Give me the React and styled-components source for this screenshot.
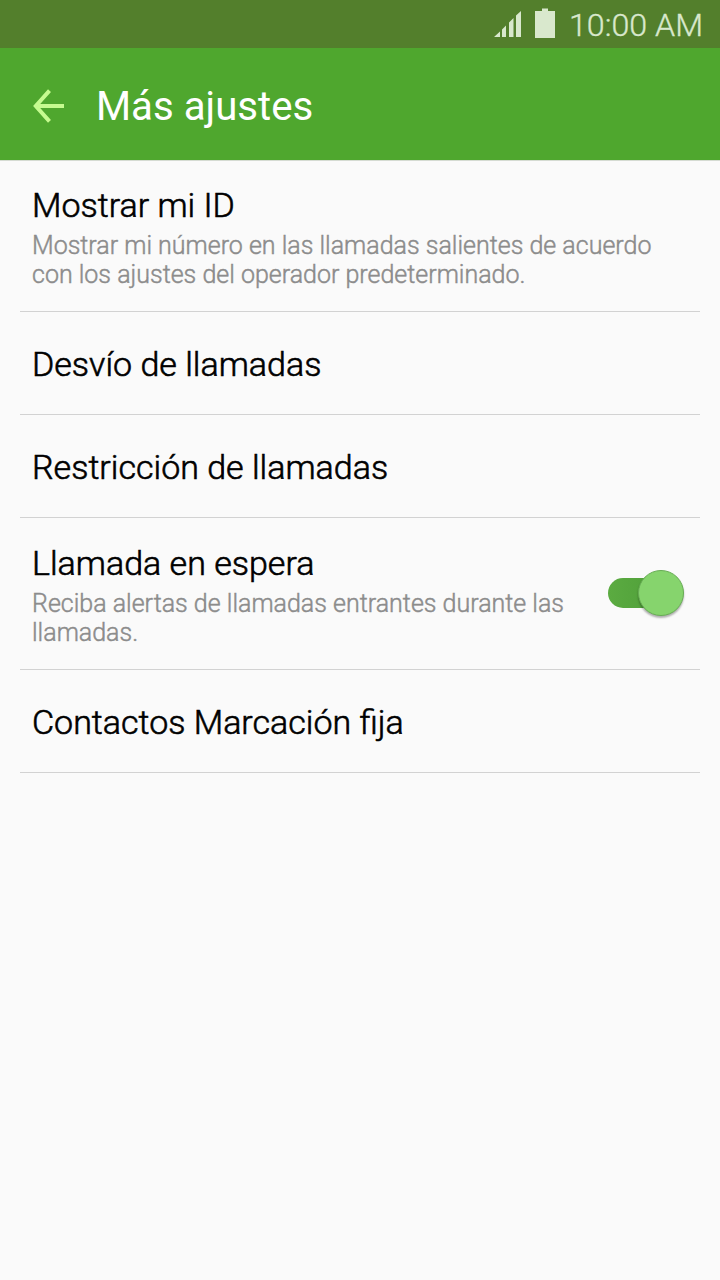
import React from "react";
import styled, { createGlobalStyle } from "styled-components";

const GlobalStyle = createGlobalStyle`
  * { box-sizing: border-box; }
  body { margin: 0; background: #fafafa; font-family: Roboto, "Noto Sans", sans-serif; }
`;

const Screen = styled.div`
  width: 720px;
  min-height: 1280px;
  display: flex;
  flex-direction: column;
  background: #fafafa;
`;

const StatusBar = styled.div`
  height: 48px;
  padding-right: 17px;
  display: flex;
  align-items: center;
  justify-content: flex-end;
  background: #537f2c;
  color: #d9e8cd;
`;

const StatusIcons = styled.svg`
  width: 64px;
  height: 32px;
  margin-right: 13px;
`;

const Clock = styled.span`
  padding-top: 2px;
  font-size: 32.2px;
  font-weight: 300;
  line-height: 46px;
  white-space: nowrap;
  -webkit-text-stroke: 0.35px currentColor;
`;

const AppBar = styled.header`
  height: 113px;
  padding: 4px 32px 0;
  display: flex;
  align-items: center;
  background: #4fa72e;
  border-bottom: 1px solid #d5dbd2;
  color: #fff;
`;

const BackButton = styled.button`
  width: 64px;
  height: 48px;
  padding: 0;
  border: 0;
  background: none;
  display: flex;
  align-items: center;
`;

const Heading = styled.h1`
  margin: 0;
  padding-top: 2px;
  font-size: 40.2px;
  font-weight: 400;
  line-height: 48px;
`;

const List = styled.ul`
  margin: -1px 0 0;
  padding: 0 20px;
  list-style: none;
`;

const Row = styled.li`
  height: ${(p) => (p.$tall ? 152 : 103)}px;
  padding: 0 12px;
  display: flex;
  align-items: center;
  justify-content: space-between;
  border-bottom: 1px solid #d2d2d2;
`;

const RowText = styled.div`
  padding-top: ${(p) => (p.$tall ? 3 : 2)}px;
  font-weight: 300;
`;

const Label = styled.div`
  font-size: 34px;
  line-height: 40px;
  color: #000;
  white-space: nowrap;
  -webkit-text-stroke: 0.6px currentColor;
`;

const Summary = styled.div`
  margin-top: 6px;
  font-size: 25px;
  line-height: 29px;
  color: #8c8c8c;
  white-space: pre;
  -webkit-text-stroke: 0.45px currentColor;
`;

const Toggle = styled.button`
  width: 76px;
  height: 46px;
  margin: 0 4px 2px 0;
  padding: 0;
  border: 0;
  background: none;
  display: flex;
  align-items: center;
`;

const Track = styled.span`
  flex: 1;
  height: 30px;
  margin-right: -23px;
  border-radius: 15px;
  background: linear-gradient(90deg, #5bab41, #4f9f39);
`;

const Thumb = styled.span`
  width: 46px;
  height: 46px;
  border-radius: 50%;
  border: 1px solid #67ad54;
  background: #86d46d;
  box-shadow: 0 2px 2px rgba(0, 0, 0, 0.3);
`;

const items = [
  {
    label: "Mostrar mi ID",
    summary:
      "Mostrar mi número en las llamadas salientes de acuerdo\ncon los ajustes del operador predeterminado.",
  },
  { label: "Desvío de llamadas" },
  { label: "Restricción de llamadas" },
  {
    label: "Llamada en espera",
    summary: "Reciba alertas de llamadas entrantes durante las\nllamadas.",
    toggle: true,
  },
  { label: "Contactos Marcación fija" },
];

export default function App() {
  return (
    <Screen>
      <GlobalStyle />
      <StatusBar>
        <StatusIcons viewBox="0 0 64 32" fill="currentColor">
          <path d="M2 29L8 23.5V29ZM10 29V21.5L14 17.5V29ZM17 29V14.5L21.5 10V29ZM24 29V7.5L29 3V29Z" />
          <path d="M43 3H50V0.5H56V3H63V30H43Z" />
        </StatusIcons>
        <Clock>10:00 AM</Clock>
      </StatusBar>
      <AppBar>
        <BackButton aria-label="Atrás">
          <svg width="34" height="36" viewBox="0 0 34 36" fill="none" stroke="#c6fb90" strokeWidth="4">
            <path d="M17.5 2.7L3.8 18L17.5 33.3M3.5 18H32" />
          </svg>
        </BackButton>
        <Heading>Más ajustes</Heading>
      </AppBar>
      <List>
        {items.map(({ label, summary, toggle }) => (
          <Row key={label} $tall={Boolean(summary)}>
            <RowText $tall={Boolean(summary)}>
              <Label>{label}</Label>
              {summary && <Summary>{summary}</Summary>}
            </RowText>
            {toggle && (
              <Toggle role="switch" aria-checked="true" aria-label={label}>
                <Track />
                <Thumb />
              </Toggle>
            )}
          </Row>
        ))}
      </List>
    </Screen>
  );
}
